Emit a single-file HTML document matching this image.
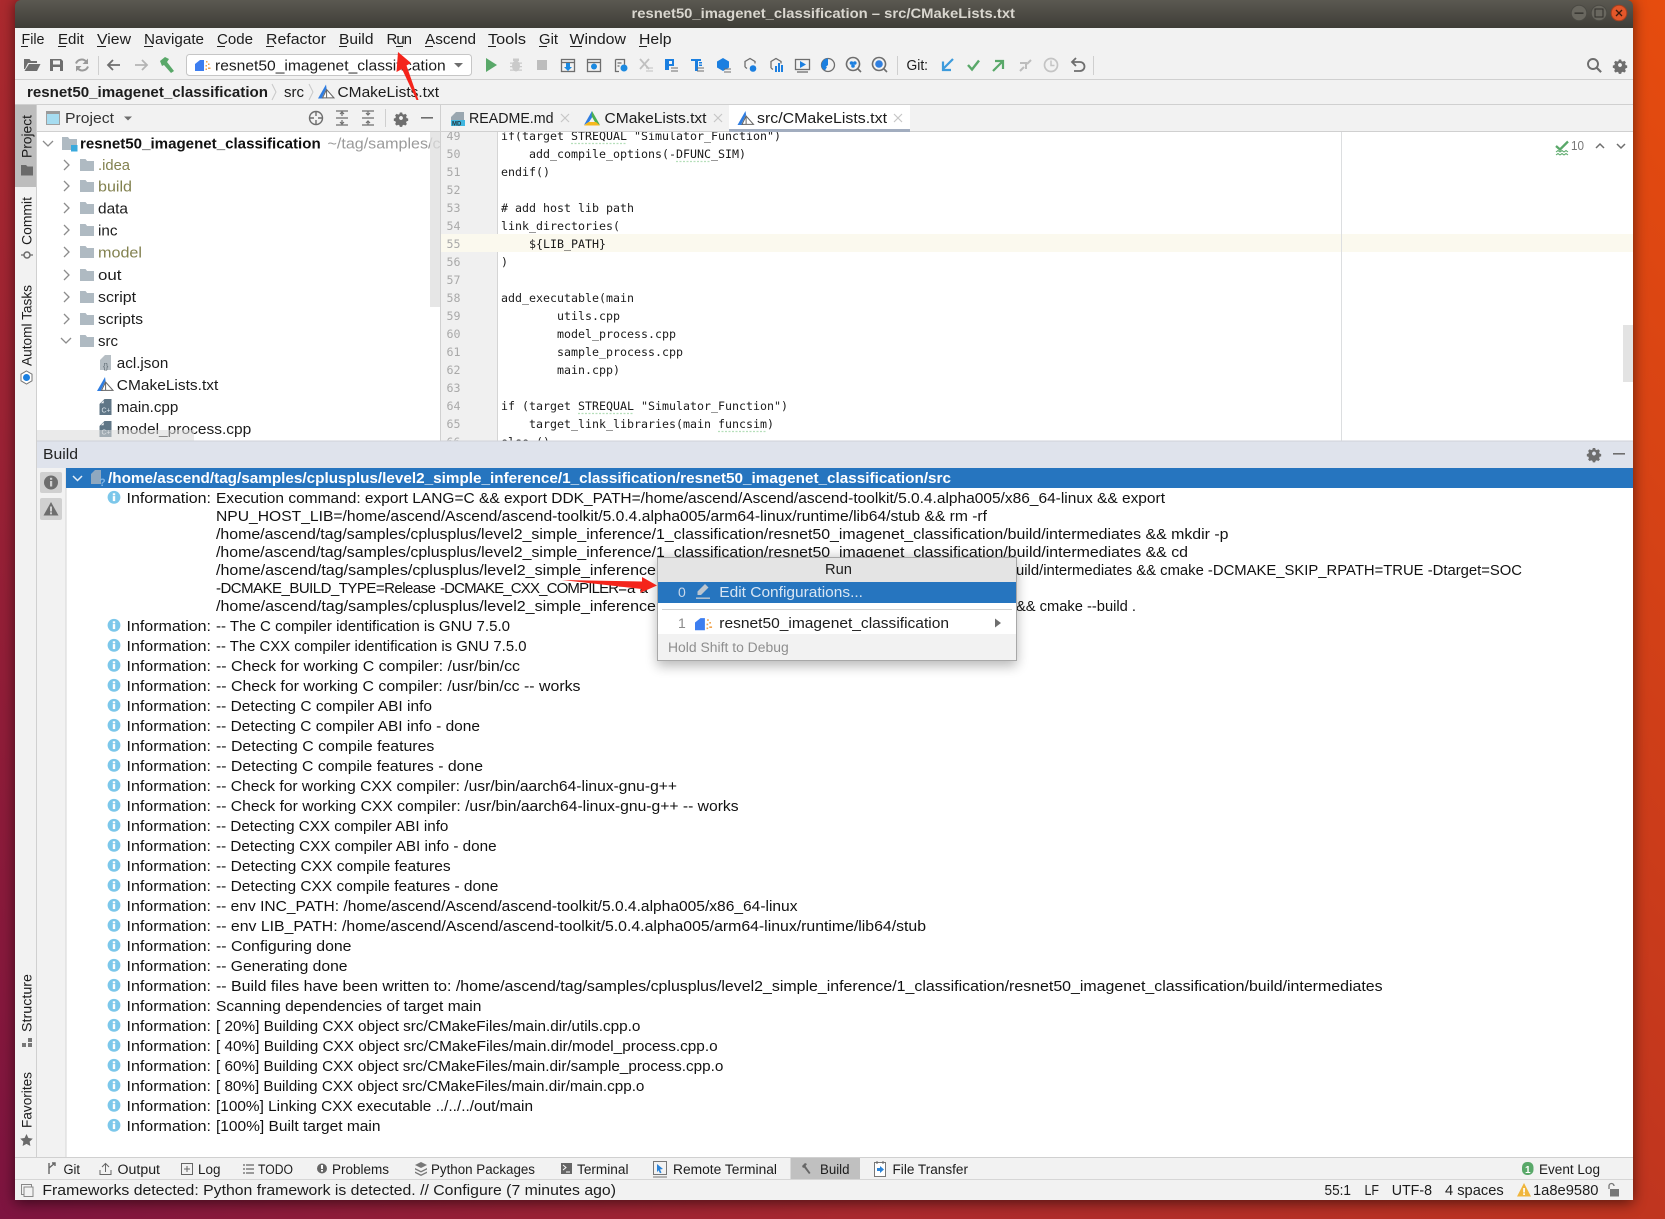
<!DOCTYPE html>
<html lang="en"><head><meta charset="utf-8"><title>resnet50_imagenet_classification – src/CMakeLists.txt</title>
<style>
html,body{margin:0;padding:0;width:1665px;height:1219px;overflow:hidden;background:#a02a30}
svg{display:block;position:absolute;left:0;top:0}
text{font-family:"Liberation Sans",sans-serif;fill:#1c1c1c;white-space:pre}
.m{font-size:15px}
.l{font-size:15px;fill:#111}
.c{font-family:"DejaVu Sans Mono","Liberation Mono",monospace;font-size:11.63px;fill:#1a1a1a}
.n{font-family:"DejaVu Sans Mono","Liberation Mono",monospace;font-size:11.63px;fill:#a9a9a9}
.b{font-size:13.5px}
.s{font-size:14.5px}
.v{font-size:13.5px}
.sq{stroke:#b5dfba;stroke-width:1.3;stroke-dasharray:2 1.5;fill:none}
</style></head>
<body>
<svg xmlns="http://www.w3.org/2000/svg" width="1665" height="1219" viewBox="0 0 1665 1219">
<defs>
<linearGradient id="wp" gradientUnits="userSpaceOnUse" x1="0" y1="1219" x2="1665" y2="0">
<stop offset="0" stop-color="#7d1440"/><stop offset=".35" stop-color="#ac2a2e"/><stop offset=".65" stop-color="#c0351f"/><stop offset="1" stop-color="#e64c0e"/></linearGradient>
<linearGradient id="tb" x1="0" y1="0" x2="0" y2="1"><stop offset="0" stop-color="#5b5951"/><stop offset="1" stop-color="#3e3d37"/></linearGradient>
<filter id="sh" x="-5%" y="-5%" width="110%" height="110%"><feGaussianBlur stdDeviation="7"/></filter>
<filter id="ps" x="-10%" y="-20%" width="120%" height="140%"><feGaussianBlur stdDeviation="6"/></filter>
<g id="i"><circle r="6.4" fill="#7cc7ea"/><rect x="-1.2" y="-1.2" width="2.4" height="5" fill="#fff"/><rect x="-1.2" y="-4" width="2.4" height="2" fill="#fff"/></g>
<path id="f" fill="#afbac2" d="M0 0h5.5l1.6 2H14v10H0z"/>
<g id="cpp"><path fill="#5f7686" d="M5 0h7v16H0V5z"/><path fill="#fff" d="M4.2 1.500V4.200H1.500z" opacity=".9"/><text x="2" y="13.500" style="font-size:7px;fill:#dfe8ee">C+</text></g>
<g id="cm"><path fill="#2f7de1" d="M8 0L0 14h5.5L9 7z"/><path fill="#fff" d="M8.5 4L4 13h10z"/><path fill="none" stroke="#666" stroke-width="1" d="M8.6 5L4.5 13.4h11.5zM8.6 5v8.4"/></g>
<g id="cm2"><path fill="#2f7de1" d="M8 0L0 14l5-3L9 5z"/><path fill="#4caf50" d="M8 0l8 14-4.5-2L7.500 5z"/><path fill="#f5b81c" d="M0 14.500h16L12 11H4.500z"/></g>
<g id="cfg"><path fill="#3d7ef0" d="M0 5l5-4h4v11H0z"/><path fill="#f0a24c" d="M11 2h1.500v1.500H11zM13 4.500h1.500V6H13zM10.500 6H12v1.500h-1.500zM13 8.500h2.500V10H13zM10.500 9.500H12V11h-1.500z"/></g>
<path id="gear" fill="#6e6e6e" fill-rule="evenodd" d="M-1.500-7h3l.5 2 1.700.7 1.800-1.100 2.100 2.100-1.100 1.800.7 1.700 2 .5v3l-2 .5-.7 1.700 1.100 1.800-2.100 2.100-1.800-1.100-1.700.7-.5 2h-3l-.5-2-1.700-.7-1.800 1.100-2.100-2.100 1.100-1.800-.7-1.700-2-.5v-3l2-.5.7-1.700-1.100-1.800 2.100-2.100 1.800 1.100 1.700-.7zM0-2.500a2.500 2.500 0 1 0 .01 0z"/>
<path id="mag" fill="none" stroke="#6e6e6e" stroke-width="1.600" d="M0-6.500a6.500 6.500 0 1 0 .01 0zM4.500 4.500l3.500 3.500"/>
</defs>

<!-- wallpaper -->
<rect width="1665" height="1219" fill="url(#wp)"/>
<rect x="15" y="2" width="1618" height="1201" fill="#000" opacity=".55" filter="url(#sh)"/>

<!-- window -->
<path d="M15 6a6 6 0 0 1 6-6H1627a6 6 0 0 1 6 6V28H15z" fill="url(#tb)"/>
<rect x="15" y="28" width="1618" height="1172" fill="#f2f2f2"/>
<text x="631.500" y="18" textLength="383.500" lengthAdjust="spacingAndGlyphs" style="font-size:14px;font-weight:bold;fill:#d9d6cf">resnet50_imagenet_classification – src/CMakeLists.txt</text>
<circle cx="1579" cy="13" r="7.800" fill="#69675f" stroke="#4a4943"/><rect x="1574.500" y="12.500" width="9" height="1.300" fill="#2f2e2a"/>
<circle cx="1599" cy="13" r="7.800" fill="#69675f" stroke="#4a4943"/><rect x="1595" y="9" width="8" height="8" fill="none" stroke="#2f2e2a"/>
<circle cx="1619" cy="13" r="7.800" fill="#e3572a" stroke="#a63f1e"/><path d="M1616 10l6 6m0-6l-6 6" stroke="#3a1a0c" stroke-width="1.300"/>

<!-- menu -->
<g class="m">
<text class="m" x="21.500" y="44" textLength="23" lengthAdjust="spacingAndGlyphs">File</text>
<text class="m" x="58" y="44" textLength="26" lengthAdjust="spacingAndGlyphs">Edit</text>
<text class="m" x="97" y="44" textLength="34" lengthAdjust="spacingAndGlyphs">View</text>
<text class="m" x="144" y="44" textLength="60" lengthAdjust="spacingAndGlyphs">Navigate</text>
<text class="m" x="217" y="44" textLength="36" lengthAdjust="spacingAndGlyphs">Code</text>
<text class="m" x="266" y="44" textLength="60" lengthAdjust="spacingAndGlyphs">Refactor</text>
<text class="m" x="339" y="44" textLength="34.500" lengthAdjust="spacingAndGlyphs">Build</text>
<text class="m" x="386.500" y="44" textLength="25.500" lengthAdjust="spacing">Run</text>
<text class="m" x="425" y="44" textLength="51" lengthAdjust="spacingAndGlyphs">Ascend</text>
<text class="m" x="488" y="44" textLength="38" lengthAdjust="spacingAndGlyphs">Tools</text>
<text class="m" x="539" y="44" textLength="19" lengthAdjust="spacingAndGlyphs">Git</text>
<text class="m" x="569.500" y="44" textLength="56.500" lengthAdjust="spacingAndGlyphs">Window</text>
<text class="m" x="639" y="44" textLength="32.500" lengthAdjust="spacingAndGlyphs">Help</text>
</g>
<g fill="#222"><rect x="21" y="46" width="7" height="1"/><rect x="58" y="46" width="8" height="1"/><rect x="97" y="46" width="9" height="1"/><rect x="144" y="46" width="9" height="1"/><rect x="217" y="46" width="8" height="1"/><rect x="266" y="46" width="8" height="1"/><rect x="339" y="46" width="8" height="1"/><rect x="396" y="46" width="7" height="1"/><rect x="425" y="46" width="8" height="1"/><rect x="488" y="46" width="8" height="1"/><rect x="539" y="46" width="8" height="1"/><rect x="570" y="46" width="12" height="1"/><rect x="639" y="46" width="8" height="1"/></g>

<!-- toolbar -->
<path fill="#6e6e6e" d="M24 59h5.500l1.500 2h6v2H28l-3 6h-1zM29 64h11.500l-3.500 7H24.500z"/>
<path fill="#6e6e6e" fill-rule="evenodd" d="M50 59h11l2 2v10H50zM53 60.500v4h7v-4zM53 67v4h7v-4z"/>
<g fill="none" stroke="#9a9a9a" stroke-width="2"><path d="M76 63.500a6 6 0 0 1 10.500-1.500"/><path d="M88 66.500a6 6 0 0 1-10.500 1.500"/></g><path fill="#9a9a9a" d="M88 58.500v5.500h-5.500zM76 71.500V66h5.500z"/>
<rect x="98" y="56" width="1" height="19" fill="#cfcfcf"/>
<path fill="none" stroke="#6e6e6e" stroke-width="1.800" d="M120 65h-12m5-5l-5 5 5 5"/>
<path fill="none" stroke="#b4b4b4" stroke-width="1.800" d="M135 65h12m-5-5l5 5-5 5"/>
<path fill="#59a869" d="M160 61l5-4 4 2-2 3 7 9-3 2-7-8-2 1z"/>
<rect x="186.500" y="54.500" width="285" height="21" rx="3" fill="#fff" stroke="#c6c6c6"/>
<use href="#cfg" x="195" y="59"/>
<text class="m" x="215" y="70.500" textLength="230.700" lengthAdjust="spacingAndGlyphs">resnet50_imagenet_classification</text>
<path fill="#6e6e6e" d="M454 63h9l-4.500 4.500z"/>
<path fill="#59a869" d="M486 58l11 7-11 7z"/>
<g fill="#cacaca"><ellipse cx="516" cy="66" rx="4" ry="5.500"/><rect x="513" y="58.500" width="6" height="2.500"/><path d="M510 62.500h12v1.200h-12zM510 66h12v1.200h-12zM510 69.500h12v1.200h-12z"/></g>
<rect x="537" y="60" width="10" height="10" fill="#bdbdbd"/>
<!-- action icons -->
<g fill="none" stroke="#6e6e6e" stroke-width="1.300">
<rect x="561.500" y="59.500" width="13" height="12"/><path d="M561.500 62.500h13"/>
<rect x="587.500" y="59.500" width="13" height="12"/><path d="M587.500 62.500h13"/>
<path d="M615.500 59.500h9v5M619 71.500h-3.500v-12M617.500 63h4M617.500 66h2"/>
<path d="M771 68v-6.500l5-3 5 3v2M771 68l2 1.500"/>
<path d="M745 67v-5.500l5-3 5 3v2M745 67l2 1.500"/>
<rect x="795.500" y="59.500" width="14" height="10"/><path d="M797 72h11"/>
<circle cx="828" cy="65" r="6.500"/>
</g>
<path fill="#1b89e0" d="M566 63h4v4h2l-4 4-4-4h2z"/><circle cx="594" cy="66.500" r="3" fill="#1b89e0"/><circle cx="624" cy="68" r="3.500" fill="#1b89e0"/>
<path fill="none" stroke="#c0c0c0" stroke-width="1.800" d="M640 59l9 10m0-10l-9 10"/><path stroke="#c0c0c0" fill="none" d="M646 68h7m-7 3h7"/>
<path fill="#1b7fe0" d="M665 59h9v7h-5v4h-4zM669 61v3h3v-3z"/><path stroke="#6e6e6e" fill="none" d="M671 68h7m-7 3h7"/>
<path fill="#1b7fe0" d="M691 59h10v2h-3v10h-3v-10h-4z"/><path fill="#1b7fe0" d="M699 62h3v1.500h-3zM699 64.500h3V66h-3z"/><path stroke="#6e6e6e" fill="none" d="M697 68h7m-7 3h7"/>
<path fill="#1b7fe0" d="M723 58l6 3.500v6l-6 3.500-6-3.500v-6z"/><path stroke="#6e6e6e" fill="none" d="M724 69h7m-7 3h7"/>
<circle cx="753" cy="68.500" r="3.300" fill="#1b7fe0"/>
<path fill="#1b7fe0" d="M775 66h2v6h-2zM778 63h2v9h-2zM781 65h2v7h-2z"/>
<path fill="#1b7fe0" d="M800 61l6 3.500-6 3.500z"/>
<path fill="#1b7fe0" d="M828 58.500a6.500 6.500 0 0 0-5 10.700l5-4.200z"/><path fill="#1b7fe0" d="M822 66a6.500 6.500 0 0 0 3 4.500l2-3.500z"/>
<g transform="translate(853,64)"><use href="#mag"/><circle cx="-1.500" cy="-1" r="1.800" fill="#1b7fe0"/><circle cx="1.800" cy="-1" r="1.800" fill="#1b7fe0"/><circle cx="0" cy="2" r="1.800" fill="#1b7fe0"/></g>
<g transform="translate(879,64)"><use href="#mag"/><circle r="3.800" fill="#2f7fe0"/></g>
<rect x="897" y="56" width="1" height="19" fill="#cfcfcf"/>
<text class="m" x="906.500" y="70" textLength="21.500" lengthAdjust="spacingAndGlyphs">Git:</text>
<path fill="none" stroke="#3d9bdc" stroke-width="2.200" d="M953 59l-10 10m0-7.500V70h8"/>
<path fill="none" stroke="#59a869" stroke-width="2.400" d="M968 65l4 4.500 7-9"/>
<path fill="none" stroke="#59a869" stroke-width="2.200" d="M993 71l10-10m-8 0h8v8"/>
<path fill="none" stroke="#bdbdbd" stroke-width="2" d="M1020 71l4-4m3-3l4-4m-11 3h6v6"/>
<circle cx="1051" cy="65" r="6.500" fill="none" stroke="#c4c4c4" stroke-width="1.700"/><path fill="none" stroke="#c4c4c4" stroke-width="1.500" d="M1051 60.500V65.500h3.500"/>
<path fill="none" stroke="#6e6e6e" stroke-width="1.800" d="M1073 62h7a4.500 4.500 0 0 1 0 9h-6m2-13l-4 4 4 4"/>
<rect x="1093" y="56" width="1" height="19" fill="#cfcfcf"/>
<g transform="translate(1593,64)" fill="none" stroke="#6e6e6e" stroke-width="1.900"><circle r="5"/><path d="M3.600 3.600l4.500 4.500" stroke-width="2.200"/></g>
<use href="#gear" transform="translate(1620,65) scale(.78)"/>
<rect x="15" y="79" width="1618" height="1" fill="#d0d0d0"/>

<!-- breadcrumb -->
<text class="m" x="27" y="97" textLength="241" lengthAdjust="spacingAndGlyphs" style="font-weight:bold">resnet50_imagenet_classification</text>
<path fill="none" stroke="#c8c8c8" d="M272 84l4 8-4 8M309 84l4 8-4 8"/>
<text class="m" x="284" y="97" textLength="20" lengthAdjust="spacingAndGlyphs">src</text>
<use href="#cm" x="318" y="84.500"/>
<text class="m" x="337.500" y="97" textLength="101.500" lengthAdjust="spacingAndGlyphs">CMakeLists.txt</text>
<rect x="15" y="104" width="1618" height="1" fill="#d0d0d0"/>

<!-- editor -->
<rect x="441" y="131" width="1192" height="310" fill="#fff"/>
<rect x="441" y="131" width="56" height="310" fill="#f0f0f0"/>
<rect x="497" y="131" width="1" height="310" fill="#d5d5d5"/>
<rect x="441" y="234" width="1192" height="18" fill="#fbf9ee"/>
<rect x="1341" y="131" width="1" height="310" fill="#dcdee0"/>
<rect x="1623" y="325" width="10" height="57" fill="#e3e3e3"/>
<g>
<text class="n" x="446.500" y="140">49</text><text class="n" x="446.500" y="158">50</text><text class="n" x="446.500" y="176">51</text><text class="n" x="446.500" y="194">52</text><text class="n" x="446.500" y="212">53</text><text class="n" x="446.500" y="230">54</text><text class="n" x="446.500" y="248">55</text><text class="n" x="446.500" y="266">56</text><text class="n" x="446.500" y="284">57</text><text class="n" x="446.500" y="302">58</text><text class="n" x="446.500" y="320">59</text><text class="n" x="446.500" y="338">60</text><text class="n" x="446.500" y="356">61</text><text class="n" x="446.500" y="374">62</text><text class="n" x="446.500" y="392">63</text><text class="n" x="446.500" y="410">64</text><text class="n" x="446.500" y="428">65</text><text class="n" x="446.500" y="446">66</text>
<text class="c" x="501" y="140">if(target STREQUAL "Simulator_Function")</text>
<text class="c" x="529" y="158">add_compile_options(-DFUNC_SIM)</text>
<text class="c" x="501" y="176">endif()</text>
<text class="c" x="501" y="212"># add host lib path</text>
<text class="c" x="501" y="230">link_directories(</text>
<text class="c" x="529" y="248">${LIB_PATH}</text>
<text class="c" x="501" y="266">)</text>
<text class="c" x="501" y="302">add_executable(main</text>
<text class="c" x="557" y="320">utils.cpp</text>
<text class="c" x="557" y="338">model_process.cpp</text>
<text class="c" x="557" y="356">sample_process.cpp</text>
<text class="c" x="557" y="374">main.cpp)</text>
<text class="c" x="501" y="410">if (target STREQUAL "Simulator_Function")</text>
<text class="c" x="529" y="428">target_link_libraries(main funcsim)</text>
<text class="c" x="501" y="446">else ()</text>
<path class="sq" d="M571 143.500h56M676 161.500h35M578 413.500h56M718 431.500h49"/>
</g>
<path fill="none" stroke="#59a869" stroke-width="2.300" d="M1556 146l4 3.500 8-8"/><path fill="none" stroke="#59a869" d="M1556 152l2-1.500 2 1.500 2-1.500 2 1.500 2-1.500 2 1.500M1556 155l2-1.500 2 1.500 2-1.500 2 1.500 2-1.500 2 1.500"/>
<text x="1571" y="150" textLength="13" lengthAdjust="spacingAndGlyphs" style="font-size:13px;fill:#777">10</text>
<path fill="none" stroke="#6e6e6e" stroke-width="1.500" d="M1596 148l4-4 4 4M1617 144l4 4 4-4"/>

<!-- tabs row -->
<rect x="36" y="105" width="1597" height="26" fill="#f2f2f2"/>
<rect x="36" y="131" width="1597" height="1" fill="#d0d0d0"/>
<rect x="729" y="105" width="181" height="26" fill="#fff"/>
<rect x="729" y="129" width="181" height="3" fill="#a2adbf"/>
<rect x="440" y="105" width="1" height="336" fill="#d0d0d0"/>
<path fill="#9aa7b0" d="M456 112h8v8h-13v-3z"/><rect x="451" y="120" width="14" height="6" fill="#40b6e0"/><text x="452" y="125.500" style="font-size:6px;font-weight:bold;fill:#24383f">MD</text>
<text class="m" x="469" y="123" textLength="84.500" lengthAdjust="spacingAndGlyphs">README.md</text>
<path stroke="#c6c6c6" stroke-width="1.200" d="M561 114l8 8m0-8l-8 8M714 114l8 8m0-8l-8 8M894 114l8 8m0-8l-8 8"/>
<use href="#cm2" x="584" y="111"/>
<text class="m" x="604.500" y="123" textLength="102" lengthAdjust="spacingAndGlyphs">CMakeLists.txt</text>
<use href="#cm" x="737.500" y="111"/>
<text class="m" x="757" y="123" textLength="130" lengthAdjust="spacingAndGlyphs">src/CMakeLists.txt</text>

<!-- project panel -->
<rect x="36" y="132" width="404" height="309" fill="#fff"/>
<rect x="46.500" y="111.500" width="13" height="13" fill="#a6dcf0" stroke="#a0a0a0"/><rect x="46" y="111" width="14" height="3" fill="#9a9a9a"/>
<text class="m" x="65" y="123" textLength="49" lengthAdjust="spacingAndGlyphs" style="fill:#333">Project</text>
<path fill="#6e6e6e" d="M124 116.500h8l-4 4z"/>
<g fill="none" stroke="#6e6e6e" stroke-width="1.400"><circle cx="316" cy="118" r="6.500"/><path d="M316 111.500v4.500M316 120v4.500M309.500 118h4.500M318 118h4.500"/>
<path d="M336 111h12M336 125h12M336 118h12M342 112v4M340 114l2-2 2 2M342 124v-4M340 122l2 2 2-2" stroke-width="1.200"/>
<path d="M362 111h12M362 125h12M362 118h12M368 111v4M366 113l2 2 2-2M368 125v-4M366 123l2-2 2 2" stroke-width="1.200"/></g>
<rect x="385" y="109" width="1" height="18" fill="#cfcfcf"/>
<use href="#gear" transform="translate(401,118) scale(.78)"/>
<rect x="421" y="117" width="12" height="1.600" fill="#6e6e6e"/>
<rect x="430" y="132" width="10" height="175" fill="#e6e6e6"/>
<!-- tree -->
<path fill="none" stroke="#8c8c8c" stroke-width="1.300" d="M43 141l5 5 5-5"/>
<path fill="#afbac2" d="M62 137h6l1.500 2H77v11H62z"/><rect x="71" y="145" width="6.500" height="6.500" fill="#3aa9dc"/>
<text class="m" x="80" y="148.500" textLength="240.700" lengthAdjust="spacingAndGlyphs" style="font-weight:bold;fill:#111">resnet50_imagenet_classification</text>
<text class="m" x="327.500" y="148.500" textLength="113" lengthAdjust="spacingAndGlyphs" style="fill:#9a9a9a">~/tag/samples/c</text>
<rect x="430" y="132" width="10" height="24" fill="#e6e6e6" opacity=".7"/>
<g fill="none" stroke="#8c8c8c" stroke-width="1.300"><path d="M64 160l5 5-5 5M64 181l5 5-5 5M64 203l5 5-5 5M64 225l5 5-5 5M64 247l5 5-5 5M64 270l5 5-5 5M64 292l5 5-5 5M64 314l5 5-5 5M61 338l5 5 5-5"/></g>
<use href="#f" x="80" y="159"/><use href="#f" x="80" y="180"/><use href="#f" x="80" y="202"/><use href="#f" x="80" y="224"/><use href="#f" x="80" y="246"/><use href="#f" x="80" y="269"/><use href="#f" x="80" y="291"/><use href="#f" x="80" y="313"/><use href="#f" x="80" y="335"/>
<text class="m" x="98" y="170" textLength="32" lengthAdjust="spacingAndGlyphs" style="fill:#82814f">.idea</text>
<text class="m" x="98" y="191.500" textLength="34" lengthAdjust="spacingAndGlyphs" style="fill:#82814f">build</text>
<text class="m" x="98" y="213.500" textLength="30" lengthAdjust="spacingAndGlyphs">data</text>
<text class="m" x="98" y="235.500" textLength="19.500" lengthAdjust="spacingAndGlyphs">inc</text>
<text class="m" x="98" y="257.500" textLength="44" lengthAdjust="spacingAndGlyphs" style="fill:#82814f">model</text>
<text class="m" x="98" y="280" textLength="23.500" lengthAdjust="spacingAndGlyphs">out</text>
<text class="m" x="98" y="302" textLength="38" lengthAdjust="spacingAndGlyphs">script</text>
<text class="m" x="98" y="324" textLength="45" lengthAdjust="spacingAndGlyphs">scripts</text>
<text class="m" x="98" y="346" textLength="20" lengthAdjust="spacingAndGlyphs">src</text>
<path fill="#b6bec4" d="M105 355h6v15h-11v-10z"/><text x="103" y="369" style="font-size:8px;fill:#5f6b73">{}</text>
<text class="m" x="116.800" y="368" textLength="51.500" lengthAdjust="spacingAndGlyphs">acl.json</text>
<use href="#cm" x="97" y="377"/>
<text class="m" x="116.800" y="390" textLength="101.500" lengthAdjust="spacingAndGlyphs">CMakeLists.txt</text>
<use href="#cpp" x="99.500" y="399"/>
<text class="m" x="116.800" y="412" textLength="61.500" lengthAdjust="spacingAndGlyphs">main.cpp</text>
<use href="#cpp" x="99.500" y="421"/>
<text class="m" x="116.800" y="434" textLength="134.500" lengthAdjust="spacingAndGlyphs">model_process.cpp</text>
<rect x="36" y="430" width="158" height="11" fill="#d8d8d8" opacity=".55"/>

<!-- left stripe -->
<rect x="15" y="105" width="21" height="1052" fill="#f2f2f2"/>
<rect x="15" y="105" width="21" height="82" fill="#bdbdbd"/>
<rect x="36" y="105" width="1" height="1052" fill="#d0d0d0"/>
<text class="v" transform="translate(31.500,158) rotate(-90)" textLength="43" lengthAdjust="spacingAndGlyphs">Project</text>
<path fill="#6a6a6a" d="M21 165h5l1.500 1.500H33v9H21z"/>
<text class="v" transform="translate(31.500,245) rotate(-90)" textLength="48" lengthAdjust="spacingAndGlyphs">Commit</text>
<circle cx="27" cy="255" r="3" fill="none" stroke="#6a6a6a" stroke-width="1.500"/><path stroke="#6a6a6a" stroke-width="1.300" d="M21 255h3M30 255h3"/>
<text class="v" transform="translate(31.500,366) rotate(-90)" textLength="81" lengthAdjust="spacingAndGlyphs">Automl Tasks</text>
<path fill="#fff" stroke="#777" d="M26.500 371l5.500 3.200v6.600l-5.500 3.200-5.500-3.200v-6.600z"/><circle cx="26.500" cy="377.500" r="3.500" fill="#1b7fe0"/>
<text class="v" transform="translate(31.500,1032) rotate(-90)" textLength="58" lengthAdjust="spacingAndGlyphs">Structure</text>
<path fill="#777" d="M28 1038h4v4h-4zM22 1043h4v4h-4zM28 1043h4v4h-4z"/>
<text class="v" transform="translate(31.500,1128) rotate(-90)" textLength="56" lengthAdjust="spacingAndGlyphs">Favorites</text>
<path fill="#6a6a6a" d="M26.500 1134l1.900 4 4.400.6-3.200 3 .8 4.400-3.900-2.100-3.900 2.100.8-4.400-3.200-3 4.400-.6z"/>

<!-- build panel -->
<rect x="37" y="441" width="1596" height="27" fill="#dfe3ec"/>
<rect x="37" y="440.500" width="1596" height="1" fill="#cfd2d8"/>
<text class="m" x="43" y="459" textLength="35" lengthAdjust="spacingAndGlyphs" style="fill:#222">Build</text>
<use href="#gear" transform="translate(1594,453.500) scale(.78)"/>
<rect x="1613" y="453" width="12" height="1.600" fill="#6e6e6e"/>
<rect x="37" y="468" width="1596" height="689" fill="#fff"/>
<rect x="37" y="468" width="29" height="689" fill="#f2f2f2"/>
<rect x="65.500" y="468" width="1" height="689" fill="#d6d6d6"/>
<rect x="40" y="472" width="22" height="21" rx="2" fill="#d0d0d0"/><circle cx="51" cy="482.500" r="7" fill="#6e6e6e"/><rect x="50" y="481" width="2.200" height="5.500" fill="#d0d0d0"/><rect x="50" y="477.800" width="2.200" height="2" fill="#d0d0d0"/>
<rect x="40" y="498" width="22" height="22" rx="2" fill="#d0d0d0"/><path fill="#6e6e6e" d="M51 502l7.500 13.500h-15z"/><rect x="50" y="506.500" width="2" height="5" fill="#d0d0d0"/><rect x="50" y="512.300" width="2" height="2" fill="#d0d0d0"/>
<rect x="66" y="468" width="1567" height="20" fill="#2675bf"/>
<path fill="none" stroke="#e8f0f8" stroke-width="1.500" d="M73 476l4.500 4.500 4.500-4.500"/>
<path fill="#8fa8bf" d="M95 470h6v14H91v-10z"/><text x="99" y="486" style="font-size:11px;font-weight:bold;fill:#7db4e6">?</text>
<text class="m" x="108" y="483" textLength="843" lengthAdjust="spacingAndGlyphs" style="font-weight:bold;fill:#fff">/home/ascend/tag/samples/cplusplus/level2_simple_inference/1_classification/resnet50_imagenet_classification/src</text>

<g>
<use href="#i" x="114" y="497.300"/><text class="l" x="126.500" y="503" textLength="84.500" lengthAdjust="spacingAndGlyphs">Information:</text>
<text class="l" x="216" y="503" textLength="949" lengthAdjust="spacingAndGlyphs">Execution command: export LANG=C &amp;&amp; export DDK_PATH=/home/ascend/Ascend/ascend-toolkit/5.0.4.alpha005/x86_64-linux &amp;&amp; export</text>
<text class="l" x="216" y="521" textLength="771" lengthAdjust="spacingAndGlyphs">NPU_HOST_LIB=/home/ascend/Ascend/ascend-toolkit/5.0.4.alpha005/arm64-linux/runtime/lib64/stub &amp;&amp; rm -rf</text>
<text class="l" x="216" y="539" textLength="1012.500" lengthAdjust="spacingAndGlyphs">/home/ascend/tag/samples/cplusplus/level2_simple_inference/1_classification/resnet50_imagenet_classification/build/intermediates &amp;&amp; mkdir -p</text>
<text class="l" x="216" y="557" textLength="972" lengthAdjust="spacingAndGlyphs">/home/ascend/tag/samples/cplusplus/level2_simple_inference/1_classification/resnet50_imagenet_classification/build/intermediates &amp;&amp; cd</text>
<text class="l" x="216" y="575" textLength="440" lengthAdjust="spacingAndGlyphs">/home/ascend/tag/samples/cplusplus/level2_simple_inference</text>
<text class="l" x="1016" y="575" textLength="506" lengthAdjust="spacingAndGlyphs">uild/intermediates &amp;&amp; cmake -DCMAKE_SKIP_RPATH=TRUE -Dtarget=SOC</text>
<text class="l" x="216" y="593" textLength="220" lengthAdjust="spacing">-DCMAKE_BUILD_TYPE=Release</text>
<text class="l" x="440" y="593" textLength="187" lengthAdjust="spacing">-DCMAKE_CXX_COMPILER=</text>
<text class="l" x="627" y="593" textLength="21" lengthAdjust="spacing">aa</text>
<text class="l" x="216" y="611" textLength="440" lengthAdjust="spacingAndGlyphs">/home/ascend/tag/samples/cplusplus/level2_simple_inference</text>
<text class="l" x="1016" y="611" textLength="120" lengthAdjust="spacingAndGlyphs">&amp;&amp; cmake --build .</text>
<use href="#i" x="114" y="625.300"/><text class="l" x="126.500" y="631" textLength="84.500" lengthAdjust="spacingAndGlyphs">Information:</text><text class="l" x="216" y="631" textLength="294" lengthAdjust="spacingAndGlyphs">-- The C compiler identification is GNU 7.5.0</text>
<use href="#i" x="114" y="645.300"/><text class="l" x="126.500" y="651" textLength="84.500" lengthAdjust="spacingAndGlyphs">Information:</text><text class="l" x="216" y="651" textLength="310.500" lengthAdjust="spacingAndGlyphs">-- The CXX compiler identification is GNU 7.5.0</text>
<use href="#i" x="114" y="665.300"/><text class="l" x="126.500" y="671" textLength="84.500" lengthAdjust="spacingAndGlyphs">Information:</text><text class="l" x="216" y="671" textLength="304" lengthAdjust="spacingAndGlyphs">-- Check for working C compiler: /usr/bin/cc</text>
<use href="#i" x="114" y="685.300"/><text class="l" x="126.500" y="691" textLength="84.500" lengthAdjust="spacingAndGlyphs">Information:</text><text class="l" x="216" y="691" textLength="364.500" lengthAdjust="spacingAndGlyphs">-- Check for working C compiler: /usr/bin/cc -- works</text>
<use href="#i" x="114" y="705.300"/><text class="l" x="126.500" y="711" textLength="84.500" lengthAdjust="spacingAndGlyphs">Information:</text><text class="l" x="216" y="711" textLength="216" lengthAdjust="spacingAndGlyphs">-- Detecting C compiler ABI info</text>
<use href="#i" x="114" y="725.300"/><text class="l" x="126.500" y="731" textLength="84.500" lengthAdjust="spacingAndGlyphs">Information:</text><text class="l" x="216" y="731" textLength="264" lengthAdjust="spacingAndGlyphs">-- Detecting C compiler ABI info - done</text>
<use href="#i" x="114" y="745.300"/><text class="l" x="126.500" y="751" textLength="84.500" lengthAdjust="spacingAndGlyphs">Information:</text><text class="l" x="216" y="751" textLength="218.300" lengthAdjust="spacingAndGlyphs">-- Detecting C compile features</text>
<use href="#i" x="114" y="765.300"/><text class="l" x="126.500" y="771" textLength="84.500" lengthAdjust="spacingAndGlyphs">Information:</text><text class="l" x="216" y="771" textLength="267" lengthAdjust="spacingAndGlyphs">-- Detecting C compile features - done</text>
<use href="#i" x="114" y="785.300"/><text class="l" x="126.500" y="791" textLength="84.500" lengthAdjust="spacingAndGlyphs">Information:</text><text class="l" x="216" y="791" textLength="461" lengthAdjust="spacingAndGlyphs">-- Check for working CXX compiler: /usr/bin/aarch64-linux-gnu-g++</text>
<use href="#i" x="114" y="805.300"/><text class="l" x="126.500" y="811" textLength="84.500" lengthAdjust="spacingAndGlyphs">Information:</text><text class="l" x="216" y="811" textLength="522.600" lengthAdjust="spacingAndGlyphs">-- Check for working CXX compiler: /usr/bin/aarch64-linux-gnu-g++ -- works</text>
<use href="#i" x="114" y="825.300"/><text class="l" x="126.500" y="831" textLength="84.500" lengthAdjust="spacingAndGlyphs">Information:</text><text class="l" x="216" y="831" textLength="232.400" lengthAdjust="spacingAndGlyphs">-- Detecting CXX compiler ABI info</text>
<use href="#i" x="114" y="845.300"/><text class="l" x="126.500" y="851" textLength="84.500" lengthAdjust="spacingAndGlyphs">Information:</text><text class="l" x="216" y="851" textLength="280.600" lengthAdjust="spacingAndGlyphs">-- Detecting CXX compiler ABI info - done</text>
<use href="#i" x="114" y="865.300"/><text class="l" x="126.500" y="871" textLength="84.500" lengthAdjust="spacingAndGlyphs">Information:</text><text class="l" x="216" y="871" textLength="234.600" lengthAdjust="spacingAndGlyphs">-- Detecting CXX compile features</text>
<use href="#i" x="114" y="885.300"/><text class="l" x="126.500" y="891" textLength="84.500" lengthAdjust="spacingAndGlyphs">Information:</text><text class="l" x="216" y="891" textLength="282.400" lengthAdjust="spacingAndGlyphs">-- Detecting CXX compile features - done</text>
<use href="#i" x="114" y="905.300"/><text class="l" x="126.500" y="911" textLength="84.500" lengthAdjust="spacingAndGlyphs">Information:</text><text class="l" x="216" y="911" textLength="581.500" lengthAdjust="spacingAndGlyphs">-- env INC_PATH: /home/ascend/Ascend/ascend-toolkit/5.0.4.alpha005/x86_64-linux</text>
<use href="#i" x="114" y="925.300"/><text class="l" x="126.500" y="931" textLength="84.500" lengthAdjust="spacingAndGlyphs">Information:</text><text class="l" x="216" y="931" textLength="710" lengthAdjust="spacingAndGlyphs">-- env LIB_PATH: /home/ascend/Ascend/ascend-toolkit/5.0.4.alpha005/arm64-linux/runtime/lib64/stub</text>
<use href="#i" x="114" y="945.300"/><text class="l" x="126.500" y="951" textLength="84.500" lengthAdjust="spacingAndGlyphs">Information:</text><text class="l" x="216" y="951" textLength="135.500" lengthAdjust="spacingAndGlyphs">-- Configuring done</text>
<use href="#i" x="114" y="965.300"/><text class="l" x="126.500" y="971" textLength="84.500" lengthAdjust="spacingAndGlyphs">Information:</text><text class="l" x="216" y="971" textLength="131.500" lengthAdjust="spacingAndGlyphs">-- Generating done</text>
<use href="#i" x="114" y="985.300"/><text class="l" x="126.500" y="991" textLength="84.500" lengthAdjust="spacingAndGlyphs">Information:</text><text class="l" x="216" y="991" textLength="1166.600" lengthAdjust="spacingAndGlyphs">-- Build files have been written to: /home/ascend/tag/samples/cplusplus/level2_simple_inference/1_classification/resnet50_imagenet_classification/build/intermediates</text>
<use href="#i" x="114" y="1005.300"/><text class="l" x="126.500" y="1011" textLength="84.500" lengthAdjust="spacingAndGlyphs">Information:</text><text class="l" x="216" y="1011" textLength="265.400" lengthAdjust="spacingAndGlyphs">Scanning dependencies of target main</text>
<use href="#i" x="114" y="1025.300"/><text class="l" x="126.500" y="1031" textLength="84.500" lengthAdjust="spacingAndGlyphs">Information:</text><text class="l" x="216" y="1031" textLength="424.400" lengthAdjust="spacingAndGlyphs">[ 20%] Building CXX object src/CMakeFiles/main.dir/utils.cpp.o</text>
<use href="#i" x="114" y="1045.300"/><text class="l" x="126.500" y="1051" textLength="84.500" lengthAdjust="spacingAndGlyphs">Information:</text><text class="l" x="216" y="1051" textLength="501.600" lengthAdjust="spacingAndGlyphs">[ 40%] Building CXX object src/CMakeFiles/main.dir/model_process.cpp.o</text>
<use href="#i" x="114" y="1065.300"/><text class="l" x="126.500" y="1071" textLength="84.500" lengthAdjust="spacingAndGlyphs">Information:</text><text class="l" x="216" y="1071" textLength="507.400" lengthAdjust="spacingAndGlyphs">[ 60%] Building CXX object src/CMakeFiles/main.dir/sample_process.cpp.o</text>
<use href="#i" x="114" y="1085.300"/><text class="l" x="126.500" y="1091" textLength="84.500" lengthAdjust="spacingAndGlyphs">Information:</text><text class="l" x="216" y="1091" textLength="428.400" lengthAdjust="spacingAndGlyphs">[ 80%] Building CXX object src/CMakeFiles/main.dir/main.cpp.o</text>
<use href="#i" x="114" y="1105.300"/><text class="l" x="126.500" y="1111" textLength="84.500" lengthAdjust="spacingAndGlyphs">Information:</text><text class="l" x="216" y="1111" textLength="317" lengthAdjust="spacingAndGlyphs">[100%] Linking CXX executable ../../../out/main</text>
<use href="#i" x="114" y="1125.300"/><text class="l" x="126.500" y="1131" textLength="84.500" lengthAdjust="spacingAndGlyphs">Information:</text><text class="l" x="216" y="1131" textLength="164.500" lengthAdjust="spacingAndGlyphs">[100%] Built target main</text>
</g>

<!-- bottom tool bar -->
<rect x="15" y="1157" width="1618" height="43" fill="#f2f2f2"/>
<rect x="15" y="1157" width="1618" height="1" fill="#d0d0d0"/>
<rect x="15" y="1179" width="1618" height="1" fill="#d6d6d6"/>
<rect x="790.500" y="1158" width="69.500" height="21" fill="#c0c0c0"/>
<path fill="none" stroke="#666" stroke-width="1.400" d="M49 1174v-11M49 1168l6-5m-3 0h3v3"/>
<text class="b" x="63.500" y="1174" textLength="16.500" lengthAdjust="spacingAndGlyphs">Git</text>
<path fill="none" stroke="#666" d="M105.500 1164v8M102 1167l3.500-3.500 3.500 3.500M100 1170v4.500h11V1170"/>
<text class="b" x="117.500" y="1174" textLength="42.500" lengthAdjust="spacingAndGlyphs">Output</text>
<rect x="181.500" y="1163.500" width="11" height="11" fill="none" stroke="#666"/><path stroke="#666" d="M184 1169h6M187 1166v6"/>
<text class="b" x="198" y="1174" textLength="22.500" lengthAdjust="spacingAndGlyphs">Log</text>
<path stroke="#666" stroke-width="1.200" d="M243 1165h2M246 1165h8M243 1169h2M246 1169h8M243 1173h2M246 1173h8"/>
<text class="b" x="258" y="1174" textLength="35" lengthAdjust="spacingAndGlyphs">TODO</text>
<circle cx="322" cy="1168.500" r="5" fill="#666"/><rect x="321" y="1165" width="2" height="4" fill="#fff"/><rect x="321" y="1170" width="2" height="1.600" fill="#fff"/>
<text class="b" x="332" y="1174" textLength="57" lengthAdjust="spacingAndGlyphs">Problems</text>
<path fill="#777" d="M421 1162l6 3-6 3-6-3zM415 1168l6 3 6-3v1.500l-6 3-6-3zM415 1171.500l6 3 6-3v1.500l-6 3-6-3z"/>
<text class="b" x="431" y="1174" textLength="104" lengthAdjust="spacingAndGlyphs">Python Packages</text>
<rect x="561" y="1163" width="11" height="11" fill="#666"/><path stroke="#fff" fill="none" d="M563 1165l3 2.500-3 2.500M566 1172h4"/>
<text class="b" x="577" y="1174" textLength="51.500" lengthAdjust="spacingAndGlyphs">Terminal</text>
<rect x="653.500" y="1161.500" width="13" height="13" fill="none" stroke="#777"/><path fill="#2b83d8" d="M657 1164l6 5-3 .5 1.500 3-1.500.7-1.500-3-1.500 2z"/><path stroke="#777" d="M653 1177h14"/>
<text class="b" x="673" y="1174" textLength="104" lengthAdjust="spacingAndGlyphs">Remote Terminal</text>
<path fill="#666" d="M802 1166l3-3 2 1-1.500 2 5 7-1.500 1-5-6.500-1 .5z"/>
<text class="b" x="820" y="1174" textLength="29.500" lengthAdjust="spacingAndGlyphs">Build</text>
<rect x="874.500" y="1162.500" width="11" height="14" fill="#fff" stroke="#777"/><path stroke="#666" d="M877 1161v3M883 1161v3"/><path fill="#2b83d8" d="M877 1168h3v-2l4 3.500-4 3.500v-2h-3z"/>
<text class="b" x="892.500" y="1174" textLength="75.500" lengthAdjust="spacingAndGlyphs">File Transfer</text>
<rect x="1522" y="1162" width="11.500" height="13" rx="5" fill="#59a869"/><text x="1525" y="1173" style="font-size:10px;font-weight:bold;fill:#fff">1</text>
<text class="b" x="1539" y="1174" textLength="61" lengthAdjust="spacingAndGlyphs">Event Log</text>

<!-- status bar -->
<rect x="21.500" y="1184.500" width="10" height="10" fill="none" stroke="#888"/><rect x="24" y="1187" width="9" height="9.500" fill="#f2f2f2" stroke="#888"/>
<text class="s" x="42.400" y="1195" textLength="573.600" lengthAdjust="spacingAndGlyphs">Frameworks detected: Python framework is detected. // Configure (7 minutes ago)</text>
<text class="s" x="1324.500" y="1195" textLength="26.500" lengthAdjust="spacingAndGlyphs">55:1</text>
<text class="s" x="1364.500" y="1195" textLength="14.500" lengthAdjust="spacingAndGlyphs">LF</text>
<text class="s" x="1391.700" y="1195" textLength="40.300" lengthAdjust="spacingAndGlyphs">UTF-8</text>
<text class="s" x="1445" y="1195" textLength="58.700" lengthAdjust="spacingAndGlyphs">4 spaces</text>
<path fill="#f0b63c" d="M1524 1183l7 13.500h-14z"/><rect x="1523.200" y="1188" width="1.700" height="4.500" fill="#fff"/><rect x="1523.200" y="1193.300" width="1.700" height="1.700" fill="#fff"/>
<text class="s" x="1533" y="1195" textLength="65.500" lengthAdjust="spacingAndGlyphs">1a8e9580</text>
<path fill="none" stroke="#777" stroke-width="1.300" d="M1609 1189v-3a2.500 2.500 0 0 1 5 0"/><rect x="1610" y="1189" width="9" height="7.500" fill="#777"/>

<!-- popup -->
<rect x="657" y="558" width="360" height="108" fill="#000" opacity=".28" filter="url(#ps)"/>
<rect x="657.500" y="557.500" width="359" height="103" fill="#fff" stroke="#a8a8a8"/>
<rect x="658" y="558" width="358" height="24" fill="#e4e4e4"/>
<rect x="658" y="582" width="358" height="21" fill="#2675bf"/>
<rect x="662" y="609" width="350" height="1" fill="#d2d2d2"/>
<rect x="658" y="634" width="358" height="26" fill="#f2f2f2"/>
<text class="m" x="825" y="574" textLength="27" lengthAdjust="spacingAndGlyphs">Run</text>
<text x="678" y="597" style="font-size:14px;fill:#c8d8ea">0</text>
<path fill="#bcc6cf" d="M705 584l3.500 3.500-7.500 7.500h-3.500v-3.500z"/><rect x="696" y="597.500" width="14" height="1.400" fill="#bcc6cf"/>
<text class="m" x="719.300" y="597" textLength="143.700" lengthAdjust="spacingAndGlyphs" style="fill:#d9e6f3">Edit Configurations...</text>
<text x="678" y="628" style="font-size:14px;fill:#8a8a8a">1</text>
<use href="#cfg" transform="translate(695,617) scale(1.100)"/>
<text class="m" x="719.300" y="628" textLength="229.700" lengthAdjust="spacingAndGlyphs">resnet50_imagenet_classification</text>
<path fill="#6e6e6e" d="M995 618.500l6 4.500-6 4.500z"/>
<text x="668" y="652" textLength="120.700" lengthAdjust="spacingAndGlyphs" style="font-size:13.500px;fill:#8e8e8e">Hold Shift to Debug</text>

<!-- red annotation arrows -->
<path fill="#f4241b" d="M398 52L411 63L406.500 65.500L418.500 100L416.500 100L402 69L396.500 72z"/>
<path fill="#f4241b" d="M562 580L642 581.500L642 577L657 585.500L640 593L641.500 589z"/>
</svg>
</body></html>
